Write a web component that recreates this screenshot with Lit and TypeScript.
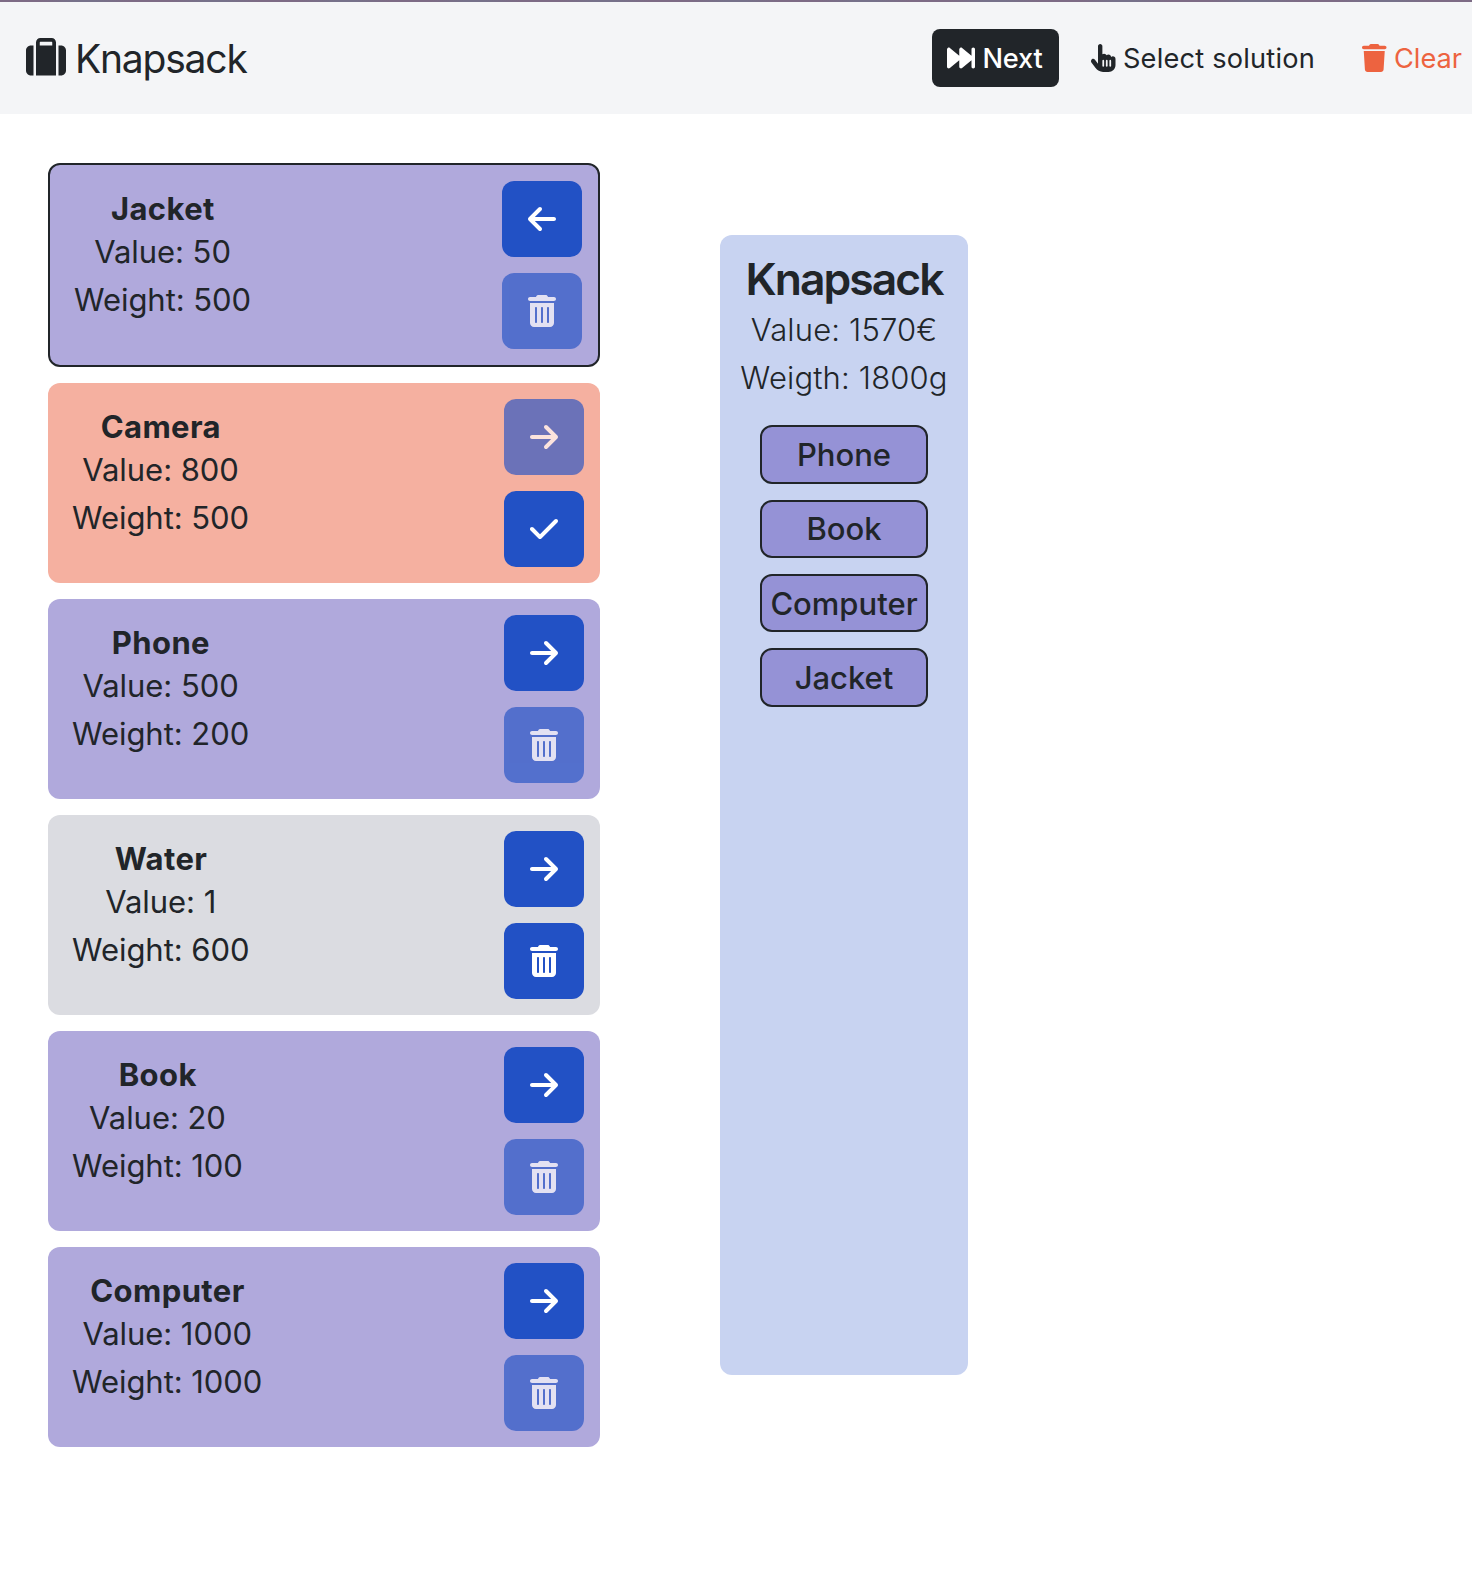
import { LitElement, html, css, svg } from "lit";
import { customElement, property, state } from "lit/decorators.js";
import { classMap } from "lit/directives/class-map.js";

interface Icon {
  width: number;
  path: string;
}

const ICONS: Record<string, Icon> = {
  suitcase: {
    width: 512,
    path: "M176 56V96H336V56c0-4.4-3.6-8-8-8H184c-4.4 0-8 3.6-8 8zM128 96V56c0-30.9 25.1-56 56-56H328c30.9 0 56 25.1 56 56V96v32V480H128V128 96zM64 96H96V480H64c-35.3 0-64-28.7-64-64V160c0-35.3 28.7-64 64-64zM448 480H416V96h32c35.3 0 64 28.7 64 64V416c0 35.3-28.7 64-64 64z",
  },
  forward: {
    width: 512,
    path: "M18.4 445c11.2 5.3 24.5 3.6 34.1-4.4L224 297.7V416c0 12.4 7.2 23.7 18.4 29s24.5 3.6 34.1-4.4L448 297.7V416c0 17.7 14.3 32 32 32s32-14.3 32-32V96c0-17.7-14.3-32-32-32s-32 14.3-32 32V214.3L276.5 71.4c-9.5-7.9-22.8-9.7-34.1-4.4S224 83.6 224 96V214.3L52.5 71.4c-9.5-7.9-22.8-9.7-34.1-4.4S0 83.6 0 96V416c0 12.4 7.2 23.7 18.4 29z",
  },
  pointer: {
    width: 448,
    path: "M128 40c0-22.1 17.9-40 40-40s40 17.9 40 40V188.2c8.5-7.6 19.7-12.2 32-12.2c20.6 0 38.2 13 45 31.2c8.8-9.3 21.2-15.2 35-15.2c25.3 0 46 19.5 47.9 44.3c8.5-7.7 19.8-12.3 32.1-12.3c26.5 0 48 21.5 48 48v48 16 48c0 70.7-57.3 128-128 128l-16 0H240l-.1 0h-5.2c-5 0-9.9-.3-14.7-1c-55.3-5.6-106.2-34-140-79L8 336c-13.3-17.7-9.7-42.7 8-56s42.7-9.7 56 8l56 74.7V40zM240 304c0-8.8-7.2-16-16-16s-16 7.2-16 16v96c0 8.8 7.2 16 16 16s16-7.2 16-16V304zm48-16c-8.8 0-16 7.2-16 16v96c0 8.8 7.2 16 16 16s16-7.2 16-16V304c0-8.8-7.2-16-16-16zm80 16c0-8.8-7.2-16-16-16s-16 7.2-16 16v96c0 8.8 7.2 16 16 16s16-7.2 16-16V304z",
  },
  trash: {
    width: 448,
    path: "M135.2 17.7L128 32H32C14.3 32 0 46.3 0 64S14.3 96 32 96H416c17.7 0 32-14.3 32-32s-14.3-32-32-32H320l-7.2-14.3C307.4 6.8 296.3 0 284.2 0H163.8c-12.1 0-23.2 6.8-28.6 17.7zM416 128H32L53.2 467c1.6 25.3 22.6 45 47.9 45H346.9c25.3 0 46.3-19.7 47.9-45L416 128z",
  },
  can: {
    width: 448,
    path: "M135.2 17.7C140.6 6.8 151.7 0 163.8 0H284.2c12.1 0 23.2 6.8 28.6 17.7L320 32h96c17.7 0 32 14.3 32 32s-14.3 32-32 32H32C14.3 96 0 81.7 0 64S14.3 32 32 32h96l7.2-14.3zM32 128H416V448c0 35.3-28.7 64-64 64H96c-35.3 0-64-28.7-64-64V128zm96 64c-8.8 0-16 7.2-16 16V432c0 8.8 7.2 16 16 16s16-7.2 16-16V208c0-8.8-7.2-16-16-16zm96 0c-8.8 0-16 7.2-16 16V432c0 8.8 7.2 16 16 16s16-7.2 16-16V208c0-8.8-7.2-16-16-16zm96 0c-8.8 0-16 7.2-16 16V432c0 8.8 7.2 16 16 16s16-7.2 16-16V208c0-8.8-7.2-16-16-16z",
  },
  right: {
    width: 448,
    path: "M438.6 278.6c12.5-12.5 12.5-32.8 0-45.3l-160-160c-12.5-12.5-32.8-12.5-45.3 0s-12.5 32.8 0 45.3L338.8 224 32 224c-17.7 0-32 14.3-32 32s14.3 32 32 32l306.7 0L233.4 393.4c-12.5 12.5-12.5 32.8 0 45.3s32.8 12.5 45.3 0l160-160z",
  },
  left: {
    width: 448,
    path: "M9.4 233.4c-12.5 12.5-12.5 32.8 0 45.3l160 160c12.5 12.5 32.8 12.5 45.3 0s12.5-32.8 0-45.3L109.2 288 416 288c17.7 0 32-14.3 32-32s-14.3-32-32-32l-306.7 0L214.6 118.6c12.5-12.5 12.5-32.8 0-45.3s-32.8-12.5-45.3 0l-160 160z",
  },
  check: {
    width: 448,
    path: "M438.6 105.4c12.5 12.5 12.5 32.8 0 45.3l-256 256c-12.5 12.5-32.8 12.5-45.3 0l-128-128c-12.5-12.5-12.5-32.8 0-45.3s32.8-12.5 45.3 0L160 338.7 393.4 105.4c12.5-12.5 32.8-12.5 45.3 0z",
  },
};

const icon = (name: string) => html`<svg
  class="icon"
  viewBox="0 0 ${ICONS[name].width} 512"
  aria-hidden="true"
>${svg`<path fill="currentColor" d=${ICONS[name].path}></path>`}</svg>`;

type Status = "packed" | "editing" | "idle";

interface Item {
  name: string;
  value: number;
  weight: number;
  status: Status;
  current?: boolean;
}

@customElement("item-card")
class ItemCard extends LitElement {
  @property({ attribute: false }) item!: Item;

  static styles = css`
    :host {
      display: block;
    }
    .card {
      display: flex;
      justify-content: space-between;
      align-items: flex-start;
      box-sizing: border-box;
      border-radius: 12px;
      padding: 16px 16px 16px 24px;
    }
    .packed {
      background: #b0a9dc;
    }
    .editing {
      background: #f5b0a0;
    }
    .idle {
      background: #dbdce1;
    }
    .current {
      border: 2px solid #212529;
    }
    .info {
      padding-top: 9px;
      text-align: center;
      font-size: 31px;
      line-height: 48px;
      letter-spacing: -0.05px;
    }
    .name {
      font-weight: 700;
      line-height: 38px;
      letter-spacing: 0.4px;
      text-indent: 0.6px;
    }
    .actions {
      display: flex;
      flex-direction: column;
      gap: 16px;
    }
    .action {
      display: flex;
      align-items: center;
      justify-content: center;
      width: 80px;
      height: 76px;
      padding: 0;
      border: 0;
      border-radius: 12px;
      background: #2251c5;
      color: #fff;
    }
    .action:disabled {
      opacity: 0.65;
    }
    .icon {
      display: block;
      height: 32px;
    }
  `;

  render() {
    const { name, value, weight, status, current } = this.item;
    const editing = status === "editing";
    return html`
      <article class=${classMap({ card: true, [status]: true, current: !!current })}>
        <div class="info">
          <div class="name">${name}</div>
          <div>Value: ${value}</div>
          <div>Weight: ${weight}</div>
        </div>
        <div class="actions">
          <button class="action" ?disabled=${editing}>${icon(current ? "left" : "right")}</button>
          <button class="action" ?disabled=${status === "packed"}>${icon(editing ? "check" : "can")}</button>
        </div>
      </article>
    `;
  }
}

@customElement("app-root")
class AppRoot extends LitElement {
  @state() private items: Item[] = [
    { name: "Jacket", value: 50, weight: 500, status: "packed", current: true },
    { name: "Camera", value: 800, weight: 500, status: "editing" },
    { name: "Phone", value: 500, weight: 200, status: "packed" },
    { name: "Water", value: 1, weight: 600, status: "idle" },
    { name: "Book", value: 20, weight: 100, status: "packed" },
    { name: "Computer", value: 1000, weight: 1000, status: "packed" },
  ];

  @state() private packed = ["Phone", "Book", "Computer", "Jacket"];

  static styles = css`
    :host {
      display: block;
      min-height: 1582px;
      background: #fff;
      color: #212529;
      font-family: Inter, "Liberation Sans", sans-serif;
    }
    .stripe {
      height: 2px;
      background: repeating-linear-gradient(90deg, #7d6b85 0 40px, #76718a 75px 95px, #7d6b85 130px);
    }
    .header {
      display: flex;
      align-items: center;
      box-sizing: border-box;
      height: 112px;
      padding: 0 10px 0 26px;
      background: #f4f5f7;
    }
    .icon {
      display: block;
      flex: none;
      height: 28px;
    }
    .brand {
      display: flex;
      align-items: center;
      gap: 9px;
      font-size: 39px;
      line-height: 60px;
      letter-spacing: -1.2px;
    }
    .brand span {
      padding-top: 2px;
    }
    .brand .icon {
      height: 40px;
    }
    .tools {
      display: flex;
      align-items: center;
      margin-left: auto;
      font-size: 27.2px;
      line-height: 42px;
    }
    .tool {
      display: flex;
      align-items: flex-start;
      box-sizing: border-box;
      height: 58px;
      padding-top: 8px;
      gap: 7px;
      white-space: nowrap;
    }
    .tool .icon {
      margin-top: 6.5px;
    }
    .tool span {
      padding-top: 0.6px;
    }
    .next {
      width: 127px;
      padding-left: 15.5px;
      border-radius: 8px;
      background: #212529;
      color: #fff;
      font-weight: 500;
      letter-spacing: -0.2px;
    }
    .select {
      margin-left: 32.5px;
      letter-spacing: 0.2px;
    }
    .clear {
      margin-left: 47.5px;
      color: #ed6340;
    }
    .main {
      display: flex;
      align-items: flex-start;
      gap: 120px;
      padding: 49px 48px 0;
    }
    .list {
      display: flex;
      flex-direction: column;
      gap: 16px;
      width: 552px;
    }
    .sack {
      display: flex;
      flex-direction: column;
      align-items: center;
      box-sizing: border-box;
      width: 248px;
      height: 1140px;
      margin-top: 72px;
      padding-top: 17px;
      border-radius: 12px;
      background: #c8d3f1;
      font-size: 31px;
      line-height: 48px;
    }
    .title {
      margin: 0;
      font-size: 44.4px;
      font-weight: 600;
      line-height: 54px;
      letter-spacing: -1.95px;
    }
    .total {
      font-weight: 300;
      white-space: nowrap;
      letter-spacing: 0.15px;
    }
    .badges {
      display: flex;
      flex-direction: column;
      gap: 16px;
      margin-top: 23.2px;
    }
    .badge {
      box-sizing: border-box;
      width: 168px;
      padding: 8.8px 0 7.2px;
      border: 2px solid #212529;
      border-radius: 12px;
      background: #9592d6;
      font-weight: 500;
      line-height: 38.4px;
      text-align: center;
    }
  `;

  render() {
    return html`
      <div class="stripe"></div>
      <header class="header">
        <div class="brand">${icon("suitcase")}<span>Knapsack</span></div>
        <nav class="tools">
          <a class="tool next">${icon("forward")}<span>Next</span></a>
          <a class="tool select">${icon("pointer")}<span>Select solution</span></a>
          <a class="tool clear">${icon("trash")}<span>Clear</span></a>
        </nav>
      </header>
      <main class="main">
        <section class="list">
          ${this.items.map((item) => html`<item-card .item=${item}></item-card>`)}
        </section>
        <section class="sack">
          <h2 class="title">Knapsack</h2>
          <div class="total">Value: 1570€</div>
          <div class="total">Weigth: 1800g</div>
          <div class="badges">
            ${this.packed.map((name) => html`<div class="badge">${name}</div>`)}
          </div>
        </section>
      </main>
    `;
  }
}
